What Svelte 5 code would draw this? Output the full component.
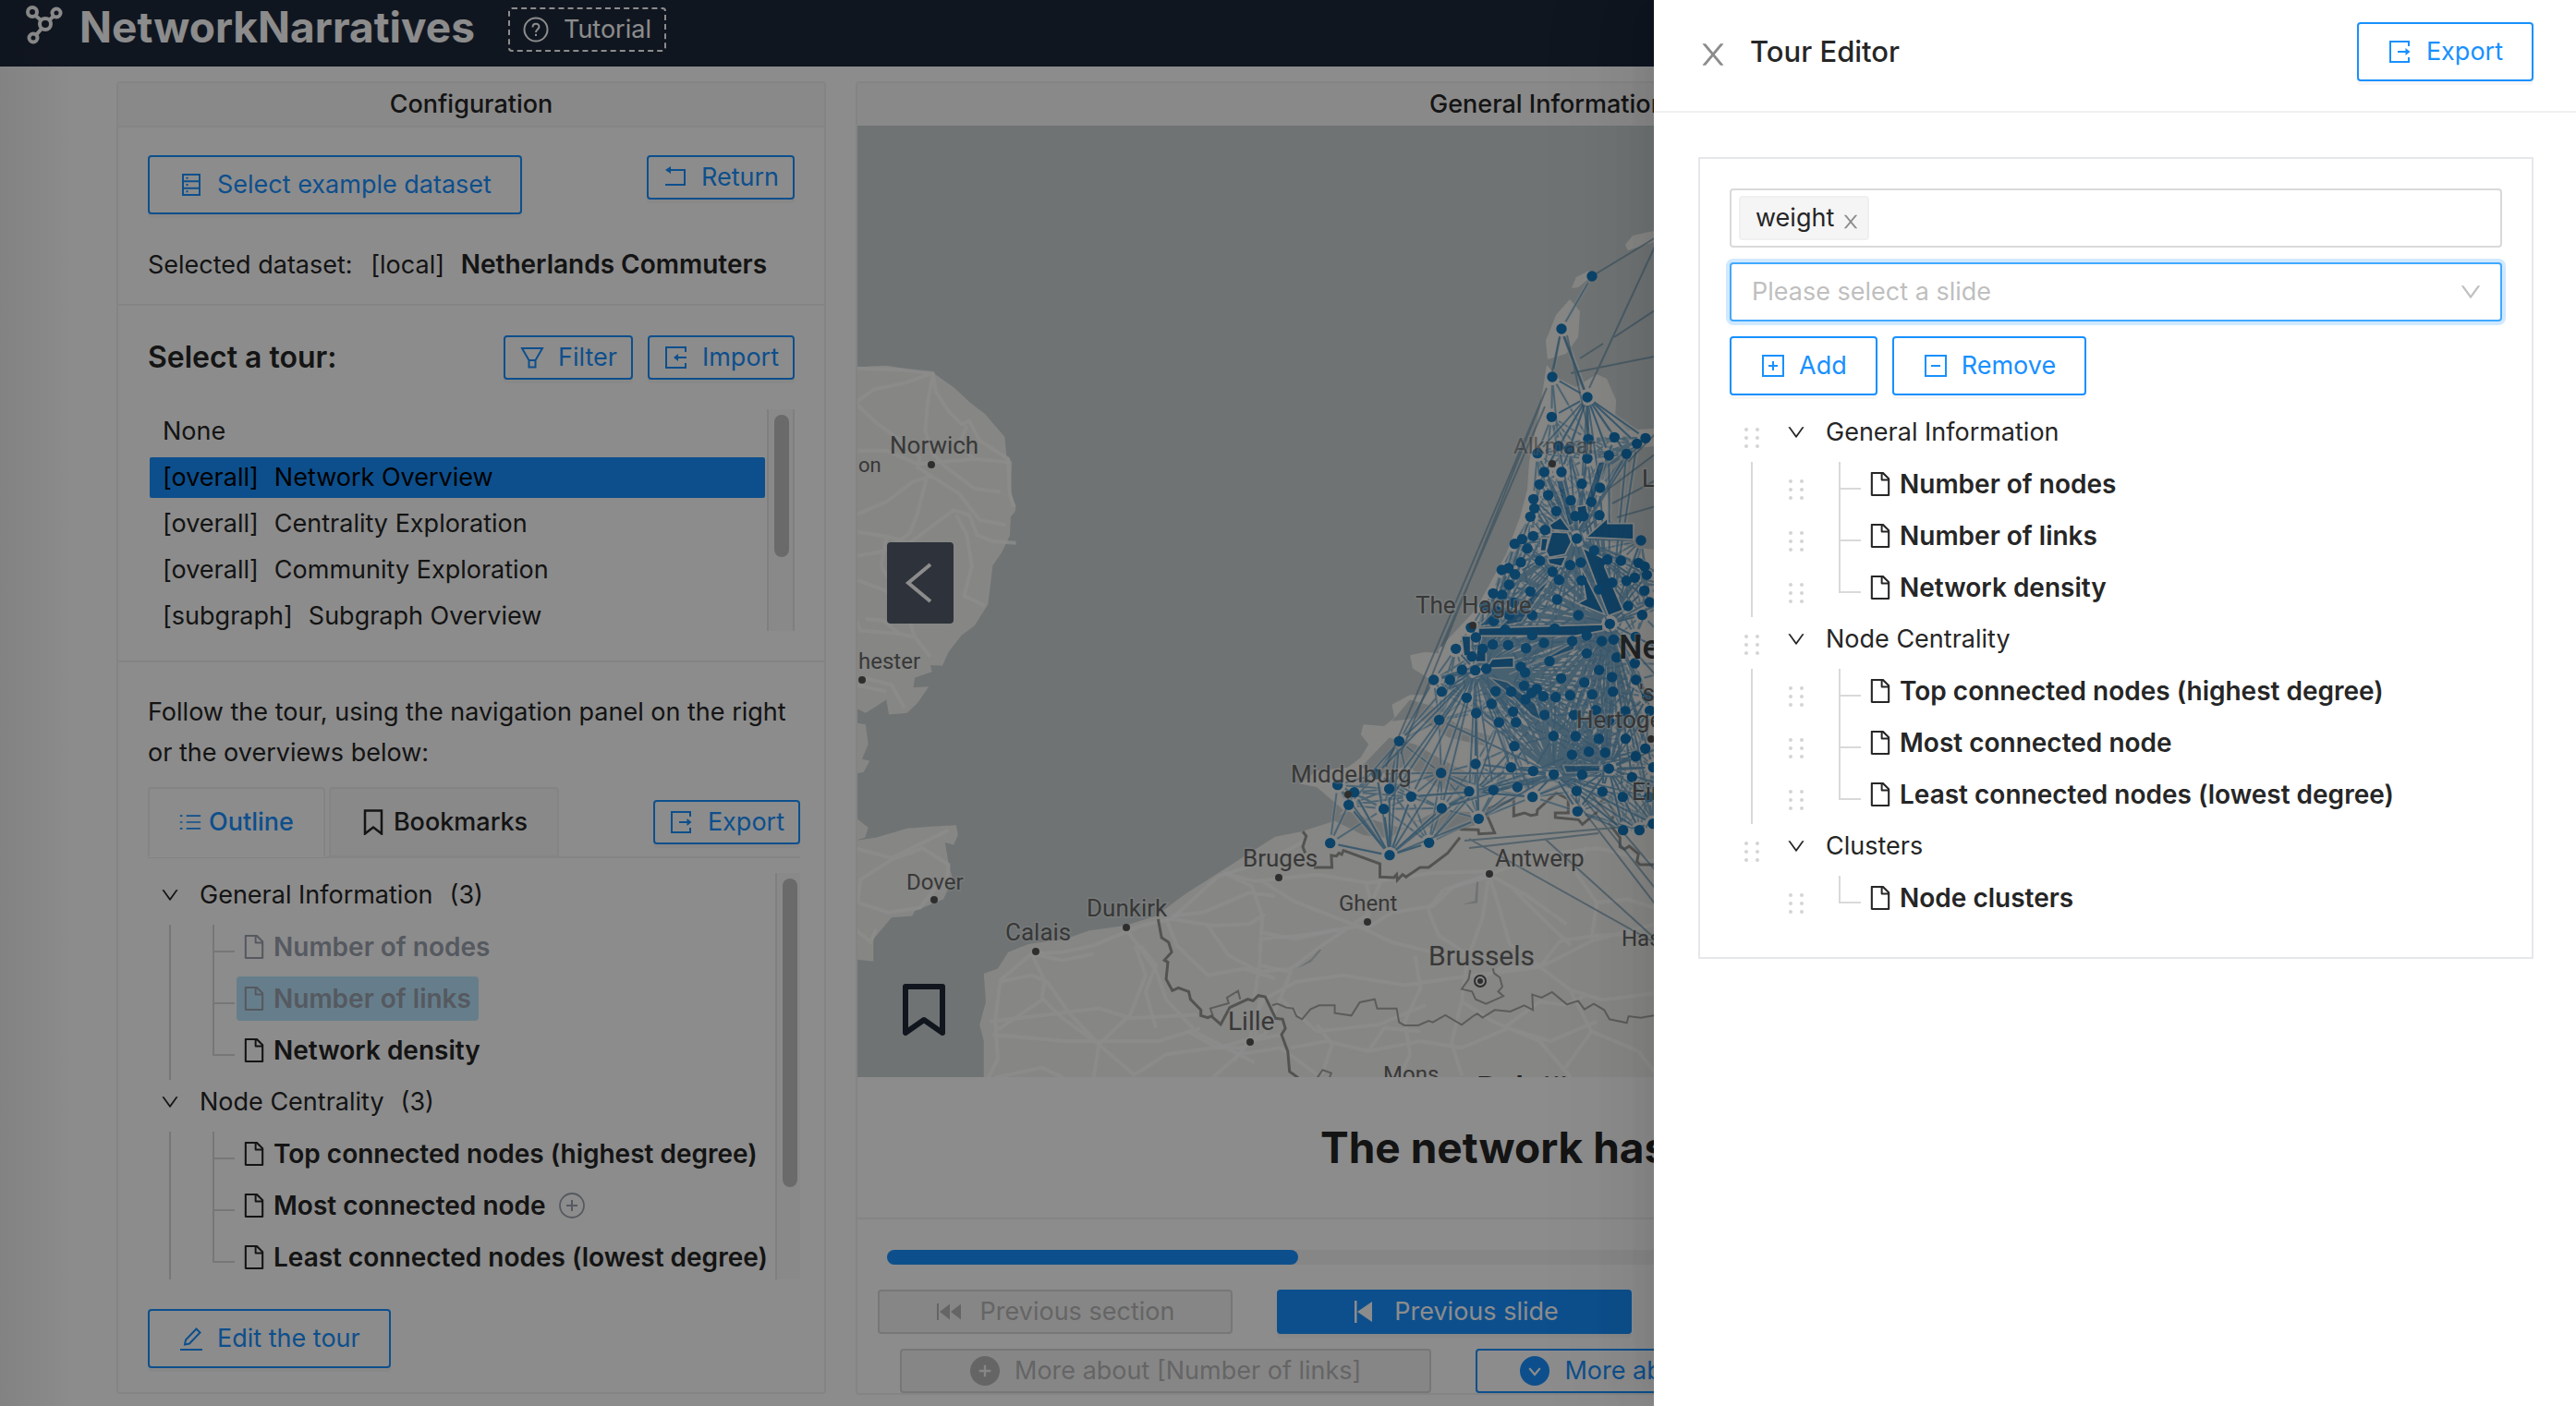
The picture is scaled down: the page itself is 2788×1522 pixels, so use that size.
<script>
  const tours = [
    { scope: '', name: 'None' },
    { scope: '[overall]', name: 'Network Overview' },
    { scope: '[overall]', name: 'Centrality Exploration' },
    { scope: '[overall]', name: 'Community Exploration' },
    { scope: '[subgraph]', name: 'Subgraph Overview' }
  ];
  let selectedTour = 'Network Overview';

  const outline = [
    {
      title: 'General Information',
      slides: [
        { name: 'Number of nodes', visited: true },
        { name: 'Number of links', visited: true, current: true },
        { name: 'Network density' }
      ]
    },
    {
      title: 'Node Centrality',
      slides: [
        { name: 'Top connected nodes (highest degree)' },
        { name: 'Most connected node', more: true },
        { name: 'Least connected nodes (lowest degree)' }
      ]
    }
  ];

  const editorTree = [
    ...outline,
    { title: 'Clusters', slides: [{ name: 'Node clusters' }] }
  ];

  // share of the slides already shown
  const progress = 26.7;

  // municipalities, in thirds of a map pixel from the tile origin
  const north = '568 34 687 106 772 100 845 121 873 103 522 152 591 128 624 139 684 169 754 159 811 154 544 213 600 213 529 253 666 251 725 264 509 301 557 288 630 305 697 310 512 331 499 358 583 340 645 356 671 356 723 353 547 401 508 421 472 431 448 446 650 429 858 435 489 461 530 501 468 506 706 468 749 497 793 501 850 508 870 520 628 515 663 507 428 525 406 531 449 545 571 537 592 563 665 565 764 572 811 566 838 556 877 547 430 579 722 594 869 598 378 607 407 612 499 601 586 627 886 636 816 648 445 637 350 647 655 678 862 677 505 678 430 677 390 665 380 697 757 706 306 718 417 725 578 721 505 743 322 750 682 744 841 748 731 762 769 757 635 762 257 787 377 773 427 775 344 787 485 785 543 768 682 802 779 815 309 812 838 834 561 827 277 855 320 857 356 852 468 845 482 864 722 856 764 879 599 883 842 888';
  const south = '485 168 538 168 511 206 592 226 673 246 686 205 737 206 778 187 820 197 803 210 841 221 881 224 928 218 974 176 1000 215 1067 206 1178 222 783 231 743 271 845 282 941 282 1012 266 1107 270 1187 268 503 298 623 276 697 306 752 306 1054 301 874 350 946 351 1021 359 1108 359 373 367 747 383 934 411 989 401 1042 404 1141 416 1172 391 621 441 736 452 808 464 875 475 967 476 1054 456 1129 484 1198 452 509 470 300 474 173 509 227 533 341 522 412 547 209 574 323 587 511 585 600 530 679 526 757 516 806 548 949 529 1033 531 1099 548 1184 548 952 595 631 619 149 698 342 737 470 697 1100 656 1153 656 1197 635';
  const islands = [[1723, 299], [1690, 356], [1680, 408], [1718, 430], [1797, 254], [1835, 640], [1830, 720], [1845, 790], [1835, 860]];

  function unpack(text, ox, oy) {
    const values = text.split(' ').map(Number);
    const points = [];
    for (let i = 0; i < values.length; i += 2) {
      points.push([ox + values[i] / 3, oy + values[i + 1] / 3]);
    }
    return points;
  }

  const nodes = [...unpack(north, 1490, 440), ...unpack(south, 1390, 680), ...islands];

  const hubs = [
    [1707, 583, 130], [1742, 675, 200], [1597, 726, 180], [1682, 838, 140],
    [1741, 832, 140], [1504, 926, 125], [1718, 430, 100], [1596, 857, 80]
  ];

  const dist = (a, b) => Math.hypot(a[0] - b[0], a[1] - b[1]);

  function segment(a, b) {
    const d = dist(a, b);
    const ux = (b[0] - a[0]) / d;
    const uy = (b[1] - a[1]) / d;
    return `M${(a[0] + ux * 9).toFixed(1)} ${(a[1] + uy * 9).toFixed(1)}L${(b[0] - ux * 9).toFixed(1)} ${(b[1] - uy * 9).toFixed(1)}`;
  }

  const localLinks = nodes.flatMap((a) =>
    nodes
      .filter((b) => b !== a && dist(a, b) < 80)
      .sort((p, q) => dist(a, p) - dist(a, q))
      .slice(0, 9)
      .map((b) => segment(a, b))
  );
  const hubLinks = hubs.flatMap((hub) =>
    nodes.filter((n) => dist(n, hub) > 20 && dist(n, hub) < hub[2]).map((n) => segment(hub, n))
  );

  const labels = [
    { text: 'Norwich', x: 963, y: 491, dot: [1008, 503] },
    { text: 'on', x: 929, y: 511, size: 22 },
    { text: 'hester', x: 929, y: 724, size: 24, dot: [933, 736] },
    { text: 'Dover', x: 981, y: 963, size: 24, dot: [1011, 974] },
    { text: 'Calais', x: 1088, y: 1018, dot: [1121, 1030] },
    { text: 'Dunkirk', x: 1176, y: 992, dot: [1219, 1004] },
    { text: 'Bruges', x: 1345, y: 938, dot: [1384, 950] },
    { text: 'Ghent', x: 1449, y: 986, size: 24, dot: [1480, 998] },
    { text: 'Antwerp', x: 1618, y: 938, dot: [1612, 946] },
    { text: 'Brussels', x: 1546, y: 1045, size: 30 },
    { text: 'Lille', x: 1329, y: 1115, size: 28, dot: [1353, 1128] },
    { text: 'Mons', x: 1497, y: 1171, size: 24 },
    { text: 'België', x: 1598, y: 1191, size: 36, strong: true },
    { text: 'Middelburg', x: 1397, y: 847, dot: [1459, 860] },
    { text: 'The Hague', x: 1532, y: 664, dot: [1594, 677] },
    { text: 'Alkmaar', x: 1638, y: 491, size: 24, faded: true, dot: [1680, 502] },
    { text: 'Lelystad', x: 1777, y: 527 },
    { text: 'Nederland', x: 1752, y: 713, size: 36, strong: true },
    { text: "'s", x: 1774, y: 759 },
    { text: 'Hertogenbosch', x: 1706, y: 788, dot: [1787, 800] },
    { text: 'Eindhoven', x: 1766, y: 866 },
    { text: 'Hasselt', x: 1755, y: 1024, size: 24 }
  ];
</script>

{#snippet icon(name, size = 28)}
  <svg class="icon" width={size} height={size} viewBox="0 0 28 28" fill="none" stroke="currentColor" stroke-width="2" aria-hidden="true">
    {#if name === 'database'}
      <path d="M5 3h18v22H5zM5 10.3h18M5 17.7h18" />
      <path d="M8.500 6.700h2M8.500 14h2M8.500 21.300h2" />
    {:else if name === 'return'}
      <path d="M9 6h15v16H3" />
      <path d="M9 2v8L3 6z" fill="currentColor" stroke="none" />
    {:else if name === 'filter'}
      <path d="M3 4h22l-7.500 13v7.500h-7V17zM10.500 17h7" />
    {:else if name === 'import'}
      <path d="M24 8V3H3v22h21v-5M25 14H13" />
      <path d="M16 10v8l-5-4z" fill="currentColor" stroke="none" />
    {:else if name === 'export'}
      <path d="M23 8V3H3v22h20v-5M11 14h10" />
      <path d="M19.500 10v8l5-4z" fill="currentColor" stroke="none" />
    {:else if name === 'list'}
      <path d="M9 6h18M9 14h18M9 22h18M1 6h3M1 14h3M1 22h3" />
    {:else if name === 'bookmark'}
      <path d="M5 1.500h18v25l-9-7-9 7z" stroke-width="2.500" />
    {:else if name === 'edit'}
      <path d="M2 26h24" />
      <path d="M7 20.500l1-5L19.500 3.500l4 4L12 19.500z" />
    {:else if name === 'question'}
      <circle cx="14" cy="14" r="12.500" />
      <path d="M10.500 11.500c0-5 7-5 7-.5 0 2.500-3.500 3-3.500 6M14 18.800v2.200" />
    {:else if name === 'plus-square'}
      <path d="M3 3h22v22H3zM14 9v10M9 14h10" />
    {:else if name === 'minus-square'}
      <path d="M3 3h22v22H3zM9 14h10" />
    {:else if name === 'plus-circle'}
      <circle cx="14" cy="14" r="13" stroke-width="1.800" />
      <path d="M14 8v12M8 14h12" />
    {:else if name === 'plus-filled'}
      <circle cx="14" cy="14" r="14" fill="currentColor" stroke="none" />
      <path d="M14 8.500v11M8.500 14h11" stroke="#f5f5f5" />
    {:else if name === 'down-filled'}
      <circle cx="14" cy="14" r="14" fill="currentColor" stroke="none" />
      <path d="M9 11.500l5 6 5-6" stroke="#fff" />
    {:else if name === 'fast-back'}
      <path d="M1 5h2v18H1zM15 5.500v17L4 14zM27 5.500v17L16 14z" fill="currentColor" stroke="none" />
    {:else if name === 'step-back'}
      <path d="M5 2h2.500v24H5zM24 3v22L8 14z" fill="currentColor" stroke="none" />
    {/if}
  </svg>
{/snippet}

{#snippet chevron(size)}
  <svg class="icon" width={size} height={size} viewBox="64 64 896 896" fill="currentColor" aria-hidden="true">
    <path d="M884 256h-75c-5.1 0-9.9 2.5-12.9 6.600L512 654.2 227.9 262.6c-3-4.1-7.8-6.600-12.9-6.600h-75c-6.500 0-10.300 7.400-6.500 12.700l352.6 486.1c12.800 17.600 39 17.600 51.700 0l352.6-486.1c3.900-5.300.1-12.700-6.400-12.700z" />
  </svg>
{/snippet}

{#snippet cross(size)}
  <svg class="icon" width={size} height={size} viewBox="64 64 896 896" fill="currentColor" aria-hidden="true">
    <path d="M563.8 512l262.5-312.9c4.4-5.2.7-13.1-6.1-13.1h-79.8c-4.7 0-9.2 2.1-12.3 5.7L511.6 449.8 295.1 191.7c-3-3.6-7.5-5.7-12.3-5.7H203c-6.8 0-10.5 7.9-6.1 13.1L459.4 512 196.9 824.9A7.95 7.95 0 00203 838h79.8c4.7 0 9.2-2.1 12.3-5.7l216.5-258.1 216.5 258.1c3 3.6 7.5 5.7 12.3 5.7h79.8c6.8 0 10.5-7.9 6.1-13.1L563.8 512z" />
  </svg>
{/snippet}

{#snippet grip()}
  <svg class="grip" width="20" height="28" viewBox="0 0 20 28" fill="currentColor" aria-hidden="true">
    {#each [5, 14, 23] as y}
      <circle cx="4" cy={y} r="2" />
      <circle cx="16" cy={y} r="2" />
    {/each}
  </svg>
{/snippet}

{#snippet tree(groups, editable)}
  <ul class="tree">
    {#each groups as group, g}
      <li>
        <div class="tree-row">
          {#if editable}
            <span class="cell">{@render grip()}</span>
          {/if}
          <button type="button" class="cell switcher" aria-label="Toggle {group.title}">{@render chevron(20)}</button>
          <span class="tree-title">{group.title}{#if !editable}<span class="count">({group.slides.length})</span>{/if}</span>
        </div>
        <ul>
          {#each group.slides as slide, s}
            <li class="tree-row">
              <span class="cell" class:rail={!editable || g < groups.length - 1}></span>
              {#if editable}
                <span class="cell">{@render grip()}</span>
              {/if}
              <span class="cell branch" class:end={s === group.slides.length - 1}></span>
              <span class="leaf" class:visited={!editable && slide.visited} class:current={!editable && slide.current}>
                <svg class="file" width="26" height="26" viewBox="64 64 896 896" fill="currentColor" aria-hidden="true">
                  <path d="M854.6 288.6L639.4 73.4c-6-6-14.1-9.4-22.6-9.4H192c-17.7 0-32 14.3-32 32v832c0 17.7 14.3 32 32 32h640c17.7 0 32-14.3 32-32V311.3c0-8.5-3.4-16.700-9.400-22.700zM790.2 326H602V137.8L790.2 326zm1.8 562H232V136h302v216a42 42 0 0042 42h216v494z" />
                </svg>
                {slide.name}
              </span>
              {#if !editable && slide.more}
                <button type="button" class="more" aria-label="Add slide">{@render icon('plus-circle')}</button>
              {/if}
            </li>
          {/each}
        </ul>
      </li>
    {/each}
  </ul>
{/snippet}

<div class="app">
  <header class="topbar">
    <svg class="logo" width="40" height="42" viewBox="0 0 40 42" fill="none" stroke="currentColor" stroke-width="4" aria-hidden="true">
      <circle cx="7" cy="7" r="5" />
      <circle cx="33" cy="8" r="4.500" />
      <circle cx="21" cy="20" r="6" />
      <circle cx="8" cy="35" r="4.500" />
      <path d="M10.500 11l6 5M30 11.500l-5 4.500M17 25l-6 7" />
    </svg>
    <h1>NetworkNarratives</h1>
    <button type="button" class="tutorial">{@render icon('question')}Tutorial</button>
  </header>

  <main>
    <section class="panel config">
      <h2 class="panel-head">Configuration</h2>

      <div class="block first">
        <div class="row top">
          <button type="button" class="btn large">{@render icon('database')}Select example dataset</button>
          <button type="button" class="btn">{@render icon('return')}Return</button>
        </div>
        <p class="dataset">Selected dataset: <span>[local]</span> <strong>Netherlands Commuters</strong></p>
      </div>

      <div class="block">
        <div class="row">
          <h3>Select a tour:</h3>
          <div class="actions">
            <button type="button" class="btn">{@render icon('filter')}Filter</button>
            <button type="button" class="btn">{@render icon('import')}Import</button>
          </div>
        </div>
        <div class="scrollbox tours">
          <div class="tour-list">
            {#each tours as tour}
              <button type="button" class="tour" class:selected={tour.name === selectedTour} on:click={() => (selectedTour = tour.name)}>
                {#if tour.scope}<span>{tour.scope}</span>{/if}{tour.name}
              </button>
            {/each}
          </div>
          <div class="track"><div class="thumb short"></div></div>
        </div>
      </div>

      <div class="block last">
        <p class="hint">Follow the tour, using the navigation panel on the right or the overviews below:</p>
        <div class="tabs">
          <button type="button" class="tab active">{@render icon('list', 24)}Outline</button>
          <button type="button" class="tab">{@render icon('bookmark')}Bookmarks</button>
          <button type="button" class="btn tab-export">{@render icon('export')}Export</button>
        </div>
        <div class="scrollbox outline">
          {@render tree(outline, false)}
          <div class="track"><div class="thumb long"></div></div>
        </div>
        <button type="button" class="btn large">{@render icon('edit')}Edit the tour</button>
      </div>
    </section>

    <section class="panel stage">
      <h2 class="panel-head">General Information</h2>
      <div class="map">
        <svg class="map-canvas" viewBox="928 136 900 1030" preserveAspectRatio="xMinYMin meet">
          <!-- land -->
          <g fill="#f4f4f1" transform="translate(920 620) scale(.5612 .3571)">
            <path d="M10-622L40-626 70-628 95-622 125-612 160-606 200-562 232-515 260-482 298-412 302-352 312-337 310-242 320-202 318-185 310-170 308-112 292-60 275-22 272 20 266 96 240 160 215 190 190 240 178 282 155 280 158 300 125 318 122 348 152 345 130 395 110 425 75 430 70 385 50 405 30 425 10 410z" />
            <path d="M10 455l20 5 5 60-12 45 15 5-12 35-16 4zM10 742l25 30-6 30-19 10z" />
            <path d="M10 812L50 803 110 775 150 770 205 765 208 795 200 825 183 818 190 880 198 930 180 990 125 1025 120 1040 80 1045 45 1110 45 1178 10 1172z" />
            <path d="M258 1530V1420L250 1370 262 1300 258 1215 285 1200 305 1150 345 1125 415 1110 460 1085 530 1070 590 1040 650 970 720 900 780 840 820 800 870 785 930 755 952 720 900 650 868 640 900 600 960 590 985 560 1000 520 985 490 990 460 1030 465 1050 440 1045 400 1080 370 1110 370 1125 330 1085 290 1080 250 1110 240 1140 245 1165 190 1720 190V1530z" />
          </g>
          <path fill="#f4f4f1" d="M1557 703L1597 660 1630 600 1645 560 1653 530 1655 500 1667 440 1674 395 1689 412 1706 419 1728 405 1739 410 1749 433 1748 452 1762 466 1840 460V900H1557z" />
          <path fill="#f4f4f1" d="M1699 324l11 13-2 28-13 18-20 6-2-20 11-28zM1701 312l5-12 14-7 3 6-15 12zM1759 265l8-10 23-5v12l-28 9z" />
          <!-- inland water -->
          <path fill="#cad2d3" d="M1735 500L1760 486 1840 478V600L1765 592 1723 583 1743 555 1739 530z" />
          <g fill="#cad2d3" transform="translate(920 620) scale(.5612 .3571)">
            <path d="M925 745l35-22 60 32 45 20 70-55 60 5 10 40-60 30-55-45-50 55-50-10z" />
            <path d="M985 590l55-90 50 20 50 45 50 40 5 75-70-35-50-60-50 25zM1045 450l35-65 45 20 50 60 60 30-10 30-70-25-60-60z" />
            <path d="M862 1200l28-30 15-30 4 4-20 36zM1180 1005l25-10 3-60 4 2-2 64z" />
          </g>
          <!-- roads -->
          <g class="roads" transform="translate(920 620) scale(.5612 .3571)">
            <path d="M10-620L100-615 160-605 165-550 190-490 215-450 230-460 250-400 305-345 308-240 315-200M10-515l35-40 60-20 55-30M160-600l-10 80-5 90 15 70 25 40 55 65 50 10M10-515l40 60 40 45 45 60-5 30 20 20M10-370h60l60 40 110-15 65 10M150-300l-20 120-15 60-50 55-55 15M150-300l60 60 40 80 50 15M10-175l60-40 50-60 40-20M240-345l-30-40 15-60M10-125l60 15 45 20 85-100 30 15 15 60 30 20 45 5M205-175l20 60 10 95-15 90 40 30M70-110L60-20l20 50 30 55" />
            <path d="M10 20l60 35 40 70 15 70-30-10-75-10L10 140M125 195l30 60M95 185l-30-40-35-5M30 320l50 20 25 70M10 340l60 20" />
            <path d="M10 835l70 30 110-85M80 870l60-35 50 50-5 70M80 870l-60 60-5 70 60 30 60-15 35-70M10 1080l30 40 10-40" />
            <path d="M350 1155l60-5 60-20 90-60 60-20 90-130 100-50 70-60M350 1155l-60 80-10 120 5 120-20 60M350 1155l25 80-5 60-85 90M530 1075l60 130 20 90 60 100 110 90M350 1155l60 20 60-20M290 1240l60-20 30 20 40 90 60 100 70 95M270 1360l110-20 100-20 60 30 130-10M275 1400l140 20 180 0 80-40M480 1430l-70-80-40-60M480 1430l60-90 30-120-20-90M480 1430l-10 100M550 1520l60-60 90-20 60 0M410 1530l-40-30-90 30" />
            <path d="M720 910l60 25 120-20 100 25 120-30 110-5M720 910l55 40 20 90-5 140-10 110M795 935l60 60 130 80 60 45 90 35 90 15M620 1040l60-10 90-60 50 10M620 1050l80 20 70-5 30-30M690 1070l40 90 60 50 60-10 60-70 85-90 30-110M610 1050l20 80 60 90 70-20 60 30M795 1110l70-10 50-10 70-20M995 1080l10-80-10-60M995 1080l50-50 80-20 40-60 65-35" />
            <path d="M1232 915l70 60 80 90M1232 915l-12 130-30 130-10 120-20 130 20 100M1232 915l100-60 110-20 110 40M1232 915l20 100 20 110 60 70 100-80 120-50M1145 960l-30 60 20 80 60 60M1145 960l90-40M1330 1195l60 70 60 30 100-20M1330 1195l40-80 70-15 70-5M1390 1130l-60-90-50-80M1330 1195l-150 30-110 25-120-30-90 20-70 60-10 120M1090 1160l10 100-30 100 10 100-20 70M830 1290l70 100 120-20 90-60M830 1290l-30 110-90 40-60-50M830 1290l20-80-60-20M850 1440l70-20 80 30 100-30 80 20 90-60 80 40 90-60M1000 1450l30-70 70 10M1180 1300l60 60 90 60 60 110M1260 1380l70-80 50 10 40-30M1390 1270l40 120-50 110M1430 1390l90 60 40 80M910 1520l20-90-30-60M700 1530l50-70 80-20 70 80" />
            <path d="M800 1290l-20 60-10 70-30 60M770 1420l60-20M1210 1235l50-40 70 0M1420 830l-20 80 40 90M1440 1000l60-10 60 30M1440 1000l-10 110M940 1080l-80 30-70-20M560 1130l30 60-20 80 20 110" />
          </g>
          <!-- provinces and countries -->
          <path class="thin" transform="translate(1200 900) scale(.3763 .3333)" d="M300 600l-8-25 53-17-5-18 32-22 6 27M470 565l15-5 25 12 20 3 10 25 16 10 24-32 25-13h45v25l48 8 24-43 43-10 7 30h56l7 45 15 10h40l30-15 12 5 36-23 47 31 33-28 12-8 15 13 35-25 45 5 40-20 25 15-2-50 27 10 30-18 43 40 32-12 18 28 27-18 30 20 15 30 50 12 5-22 35 5 38-7M1040 450l-5 30-20 32 30 8 10 25 30 15 50-25-15-15 12-15-7-30-17-15-3-15M600 800l15-25 25 10-5 15" />
          <path class="border" transform="translate(1200 900) scale(.3763 .3333)" d="M142 285l10 60 20 15 9 32-21 26 10 7-5 55 18 37 17-9 30 12 5 25 30 35v18l20 7 10-5 27 27 26-55 52-27 15 5 15-17 20 4 30 70 20 3 8 30-11 20 18 55 5 65 25 20M558 0l10 15-10 35 7 20M590 117h52l-2-39 15 2 7-10 8 5 5-13 105 43v43l40 2 8-10 2 18 15-18 10 8 40-31h25l55-47 35-50" />
          <path class="border" transform="translate(1390 680) scale(.3333)" d="M570 653l60 2 2 13 51-3-28-65 10-15 80-30v55l35-10 20 8 20-3 2-15 61-55 39 20v45l-42 0v15l75 7 13 15 50-42v-20l22-23 35 48-20 35 35 45v30l15 8 15-10 30 25-5 25 10 10h60" />

          <!-- commuter links -->
          <path class="halo" d={localLinks.join('')} />
          <path class="links" d={localLinks.join('')} />
          <path class="halo hub" d={hubLinks.join('')} />
          <path class="links hub" d={hubLinks.join('')} />
          <path class="faint" d="M1688 364L1680 402M1692 364L1714 422M1696 363L1720 470M1723 299L1797 254 1720 420M1700 404L1800 384M1710 388L1735 372M1747 365L1800 330M1674 420L1500 830M1670 430L1516 816M1672 440L1560 700M1590 908L1790 1020M1672 908L1800 1024M1700 860L1800 990M1712 862L1810 985M1722 860L1815 970M1585 910L1760 895M1590 918L1730 902M1740 530L1820 470M1745 545L1820 505M1750 560L1820 540M1762 500L1820 440" />
          <g class="flows" transform="translate(1490 440) scale(.3333)">
            <path class="soft" d="M400 715l160-155 20-40 20-10-130 190zM582 240h23l35 140-15 10zM720 180h22l-42 145-25-5zM330 715l70-70v60zM430 870l130-60 90-50-10 30-140 50z" />
            <path class="soft" d="M365 880l60 15 90 70 20 55-30-15-60-60zM605 1165h115l5-15v35l-110 5z" />
            <path d="M680 425l70-63v18h84v52zM668 458l82 42-10 20 60 142-48 18zM662 520l78 155-88-35 28-15zM330 720l405-12v20l-90 17H330zM560 385l37-25 33 45-60-5zM568 408l52 2 12 30-20 40-52 10-10-20zM535 428h22l-8 42h-18zM555 495l60-7-15 32-40-10zM275 745h30v65h-22zM325 790h30v40h-35zM375 820l70-5v32l-90 3zM650 325l30-5 5 25-28 45z" />
          </g>

          <g fill="#167ac0">
            {#each nodes as [x, y]}
              <circle cx={x} cy={y} r="5.700" />
            {/each}
          </g>

          {#each labels as label}
            <text class="label" class:strong={label.strong} class:faded={label.faded} x={label.x} y={label.y} font-size={label.size ?? 26}>{label.text}</text>
            {#if label.dot}
              <circle cx={label.dot[0]} cy={label.dot[1]} r="4" fill="#555" />
            {/if}
          {/each}
          <circle cx="1602" cy="1062" r="6" fill="none" stroke="#555" stroke-width="2" />
          <circle cx="1602" cy="1062" r="3" fill="#555" />
        </svg>
        <button type="button" class="map-prev" aria-label="Previous slide">
          <svg width="40" height="48" viewBox="0 0 40 48" fill="none" stroke="#fff" stroke-width="4" aria-hidden="true"><path d="M31 4L7 24l24 20" /></svg>
        </button>
        <button type="button" class="map-bookmark" aria-label="Bookmark slide">
          <svg width="48" height="60" viewBox="0 0 48 60" fill="none" stroke="#1f2937" stroke-width="6" stroke-linejoin="round" aria-hidden="true"><path d="M4 4h40v50L24 40 4 54z" /></svg>
        </button>
      </div>

      <p class="caption">The network has</p>

      <div class="player">
        <div class="bar"><div class="fill" style="width: {progress}%"></div></div>
        <div class="buttons">
          <button type="button" class="btn nav" disabled>{@render icon('fast-back')}Previous section</button>
          <button type="button" class="btn nav primary">{@render icon('step-back')}Previous slide</button>
        </div>
        <div class="buttons second">
          <button type="button" class="btn more-about" disabled>{@render icon('plus-filled', 32)}More about [Number of links]</button>
          <button type="button" class="btn more-about">{@render icon('down-filled', 32)}More about</button>
        </div>
      </div>
    </section>
  </main>

  <div class="mask"></div>

  <aside class="drawer">
    <header class="drawer-head">
      <button type="button" class="close" aria-label="Close">{@render cross(32)}</button>
      <h2>Tour Editor</h2>
      <button type="button" class="btn large">{@render icon('export')}Export</button>
    </header>
    <div class="editor">
      <div class="tags">
        <span class="tag">weight<button type="button" aria-label="Remove weight">{@render cross(20)}</button></span>
        <input type="text" aria-label="Edge attributes" />
      </div>
      <div class="slide-select">
        <select aria-label="Slide">
          <option>Please select a slide</option>
        </select>
        <span class="arrow">{@render chevron(24)}</span>
      </div>
      <div class="editor-actions">
        <button type="button" class="btn large">{@render icon('plus-square')}Add</button>
        <button type="button" class="btn large">{@render icon('minus-square')}Remove</button>
      </div>
      {@render tree(editorTree, true)}
    </div>
  </aside>
</div>

<style>
  :global(body) {
    margin: 0;
    overflow: hidden;
  }

  .app {
    position: relative;
    min-height: 100vh;
    box-sizing: border-box;
    background: #fff;
    color: #262626;
    font-family: Inter, "Liberation Sans", sans-serif;
    font-size: 27px;
    line-height: 44px;
  }

  .app :global(*) {
    box-sizing: border-box;
  }

  h1, h2, h3, p, ul {
    margin: 0;
    padding: 0;
    list-style: none;
  }

  button, input, select {
    font: inherit;
    color: inherit;
    margin: 0;
    padding: 0;
    border: 0;
    background: none;
  }

  .icon {
    display: block;
    flex: none;
  }

  .topbar {
    display: flex;
    align-items: center;
    height: 72px;
    padding: 0 28px 8px;
    background: #1e293b;
    color: #fff;
  }

  .topbar h1 {
    margin: 0 36px 6px 18px;
    font-size: 46px;
    font-weight: 700;
    line-height: 56px;
  }

  .logo {
    margin-bottom: 10px;
  }

  .tutorial {
    display: flex;
    align-items: center;
    gap: 16px;
    height: 48px;
    padding: 0 14px;
    border: 2px dashed #fff;
    border-radius: 4px;
  }

  main {
    display: flex;
    align-items: flex-start;
    gap: 32px;
    padding: 16px 126px 14px;
  }

  .panel {
    border: 2px solid #f0f0f0;
    border-radius: 4px;
  }

  .config {
    flex: none;
    width: 768px;
  }

  .stage {
    flex: 1;
    min-width: 0;
  }

  .panel-head {
    height: 48px;
    border-bottom: 2px solid #f0f0f0;
    background: #fafafa;
    font-size: 27px;
    font-weight: 500;
    line-height: 46px;
    text-align: center;
  }

  .stage .panel-head {
    height: 46px;
    padding-left: 619px;
    border: 0;
    text-align: left;
    white-space: nowrap;
  }

  .block {
    padding: 32px;
    border-bottom: 2px solid #f0f0f0;
  }

  .block.first {
    padding: 30px 32px 20px;
  }

  .block.last {
    padding: 32px 26px 26px 32px;
    border: 0;
  }

  .row {
    display: flex;
    align-items: center;
    justify-content: space-between;
  }

  .row.top {
    align-items: flex-start;
  }

  .actions {
    display: flex;
    gap: 16px;
  }

  .btn {
    display: inline-flex;
    align-items: center;
    gap: 14px;
    height: 48px;
    padding: 0 15px;
    border: 2px solid #1890ff;
    border-radius: 4px;
    background: #fff;
    box-shadow: 0 4px 0 rgba(0, 0, 0, 0.03);
    color: #1890ff;
    line-height: 44px;
    white-space: nowrap;
  }

  .btn.large {
    height: 64px;
    padding: 0 31px;
  }

  .btn.primary {
    background: #1890ff;
    color: #fff;
  }

  .btn:disabled {
    border-color: #d9d9d9;
    background: #f5f5f5;
    box-shadow: none;
    color: #b8b8b8;
  }

  .dataset {
    margin-top: 32px;
  }

  .dataset span {
    margin: 0 10px 0 12px;
  }

  strong {
    font-size: 28px;
    font-weight: 600;
  }

  h3 {
    font-size: 32px;
    font-weight: 600;
    line-height: 48px;
  }

  .scrollbox {
    display: flex;
    justify-content: space-between;
    overflow: hidden;
  }

  .tours {
    height: 240px;
    margin-top: 32px;
  }

  .tour-list {
    display: flex;
    flex: 1;
    flex-direction: column;
    gap: 6px;
    padding: 2px;
  }

  .tour {
    flex: none;
    height: 44px;
    padding-left: 14px;
    border-radius: 2px;
    text-align: left;
  }

  .tour span {
    margin-right: 17px;
  }

  .tour.selected {
    background: #1890ff;
    color: #000;
  }

  .track {
    flex: none;
    width: 30px;
    padding: 6px;
    border: solid #e8e8e8;
    border-width: 0 2px;
    background: #fafafa;
  }

  .thumb {
    width: 16px;
    border-radius: 8px;
    background: #c1c1c1;
  }

  .thumb.short {
    height: 154px;
  }

  .thumb.long {
    height: 334px;
  }

  .hint {
    margin-right: 4px;
  }

  .tabs {
    display: flex;
    align-items: center;
    gap: 4px;
    height: 76px;
    margin-top: 16px;
    border-bottom: 2px solid #f0f0f0;
  }

  .tab {
    display: flex;
    align-items: center;
    gap: 8px;
    height: 76px;
    padding: 0 32px;
    border: 2px solid #f0f0f0;
    border-radius: 4px 4px 0 0;
    background: #fafafa;
    font-weight: 500;
  }

  .tab.active {
    border-bottom-color: #fff;
    background: #fff;
    color: #1890ff;
  }

  .tab-export {
    margin-left: auto;
  }

  .outline {
    height: 440px;
    margin: 16px 0 32px;
  }

  .tree {
    white-space: nowrap;
  }

  .tree-row {
    display: flex;
    height: 56px;
    line-height: 48px;
  }

  .cell {
    position: relative;
    display: flex;
    flex: none;
    justify-content: center;
    width: 48px;
  }

  .switcher {
    align-items: center;
    height: 48px;
  }

  .grip {
    margin-top: 16px;
    color: #d4d4d4;
  }

  .rail::before {
    content: "";
    width: 2px;
    background: #d9d9d9;
  }

  .branch::before {
    content: "";
    position: absolute;
    top: 0;
    left: 22px;
    width: 22px;
    height: 28px;
    border: solid #d9d9d9;
    border-width: 0 0 2px 2px;
  }

  .branch:not(.end)::after {
    content: "";
    position: absolute;
    top: 28px;
    bottom: 0;
    left: 22px;
    width: 2px;
    background: #d9d9d9;
  }

  .tree-title {
    padding-left: 8px;
  }

  .count {
    margin-left: 18px;
  }

  .leaf {
    display: flex;
    align-items: center;
    gap: 8px;
    height: 48px;
    padding: 0 8px 0 6px;
    border-radius: 4px;
    font-size: 28px;
    font-weight: 600;
  }

  .leaf.visited {
    color: #9ca3af;
  }

  .leaf.current {
    background: #bae6fd;
  }

  .more {
    height: 48px;
    padding: 0 6px;
    color: #9ca3af;
  }

  .map {
    position: relative;
    height: 1030px;
    overflow: hidden;
    background: #cad2d3;
  }

  .map-canvas {
    display: block;
    width: 100%;
    height: 100%;
    overflow: visible;
  }

  .roads path {
    fill: none;
    stroke: #fff;
    stroke-width: 4px;
    stroke-linejoin: round;
    stroke-opacity: 0.8;
    vector-effect: non-scaling-stroke;
  }

  .thin, .border {
    fill: none;
    stroke: #a8a8a6;
    stroke-width: 2px;
    vector-effect: non-scaling-stroke;
  }

  .border {
    stroke: #979795;
    stroke-width: 3px;
  }

  .halo {
    fill: none;
    stroke: #eef1f1;
    stroke-width: 4px;
    opacity: 0.5;
  }

  .links {
    fill: none;
    stroke: #3a86b8;
    stroke-width: 2px;
    opacity: 0.55;
  }

  .halo.hub {
    stroke-width: 6px;
    opacity: 0.45;
  }

  .links.hub {
    stroke-width: 2px;
    opacity: 0.6;
  }

  .faint {
    fill: none;
    stroke: #5b8ba6;
    stroke-width: 2px;
    opacity: 0.6;
  }

  .flows path {
    fill: #1a74b3;
    stroke: #e8ecec;
    stroke-width: 5px;
    opacity: 0.95;
  }

  .flows .soft {
    opacity: 0.65;
  }

  .label {
    fill: #666;
    stroke: rgba(244, 244, 241, 0.4);
    stroke-width: 3px;
    paint-order: stroke;
    font-family: Roboto, sans-serif;
  }

  .label.strong {
    fill: #3c4043;
    font-weight: 500;
  }

  .label.faded {
    opacity: 0.6;
  }

  .map-prev {
    position: absolute;
    top: 451px;
    left: 32px;
    display: flex;
    align-items: center;
    justify-content: center;
    width: 72px;
    height: 88px;
    border-radius: 4px;
    background: rgba(55, 63, 82, 0.85);
  }

  .map-bookmark {
    position: absolute;
    bottom: 42px;
    left: 48px;
    line-height: 0;
  }

  .caption {
    height: 154px;
    padding-left: 501px;
    border-bottom: 2px solid #f0f0f0;
    font-size: 46px;
    font-weight: 700;
    line-height: 152px;
    white-space: nowrap;
  }

  .player {
    padding: 33px 0 0;
    overflow: hidden;
  }

  .bar {
    height: 16px;
    margin: 0 32px;
    border-radius: 8px;
    background: #f5f5f5;
  }

  .fill {
    height: 16px;
    border-radius: 8px;
    background: #1890ff;
  }

  .buttons {
    display: flex;
    gap: 48px;
    margin-top: 27px;
    padding-left: 22px;
  }

  .buttons.second {
    margin-top: 16px;
    padding-left: 46px;
  }

  .nav {
    justify-content: center;
    gap: 20px;
    width: 384px;
  }

  .more-about {
    gap: 16px;
    padding: 0 74px;
  }

  .more-about:last-child {
    padding: 0 46px;
  }

  .mask {
    position: absolute;
    inset: 0;
    background: linear-gradient(to right, rgba(0, 0, 0, 0.07), rgba(0, 0, 0, 0) 80px), rgba(0, 0, 0, 0.45);
  }

  .drawer {
    position: absolute;
    top: 0;
    right: 0;
    bottom: 0;
    width: 998px;
    background: #fff;
    box-shadow: -12px 0 32px -16px rgba(0, 0, 0, 0.08), -18px 0 56px rgba(0, 0, 0, 0.05), -24px 0 96px 32px rgba(0, 0, 0, 0.03);
  }

  .drawer-head {
    display: flex;
    align-items: center;
    height: 122px;
    padding: 0 46px 8px 48px;
    border-bottom: 2px solid #f0f0f0;
  }

  .drawer-head h2 {
    flex: 1;
    margin-left: 24px;
    font-size: 31px;
    font-weight: 500;
  }

  .close {
    margin-top: 6px;
    color: #8c8c8c;
  }

  .editor {
    margin: 48px 46px 0 48px;
    padding: 32px;
    border: 2px solid #e5e7eb;
  }

  .tags {
    display: flex;
    align-items: center;
    height: 64px;
    padding: 0 8px;
    border: 2px solid #d9d9d9;
    border-radius: 4px;
  }

  .tags input {
    flex: 1;
    min-width: 0;
    height: 48px;
  }

  .tag {
    display: flex;
    align-items: center;
    gap: 8px;
    height: 48px;
    padding: 0 8px 0 16px;
    border: 2px solid #f0f0f0;
    border-radius: 4px;
    background: #f5f5f5;
  }

  .tag button {
    padding-top: 8px;
    color: #8c8c8c;
  }

  .slide-select {
    position: relative;
    margin-top: 16px;
  }

  .slide-select select {
    display: block;
    width: 100%;
    height: 64px;
    padding: 0 22px;
    border: 2px solid #40a9ff;
    border-radius: 4px;
    background: #fff;
    box-shadow: 0 0 0 4px rgba(24, 144, 255, 0.2);
    color: #bfbfbf;
    appearance: none;
  }

  .arrow {
    position: absolute;
    top: 20px;
    right: 22px;
    color: #bfbfbf;
    pointer-events: none;
  }

  .editor-actions {
    display: flex;
    gap: 16px;
    margin: 16px 0;
  }
</style>
